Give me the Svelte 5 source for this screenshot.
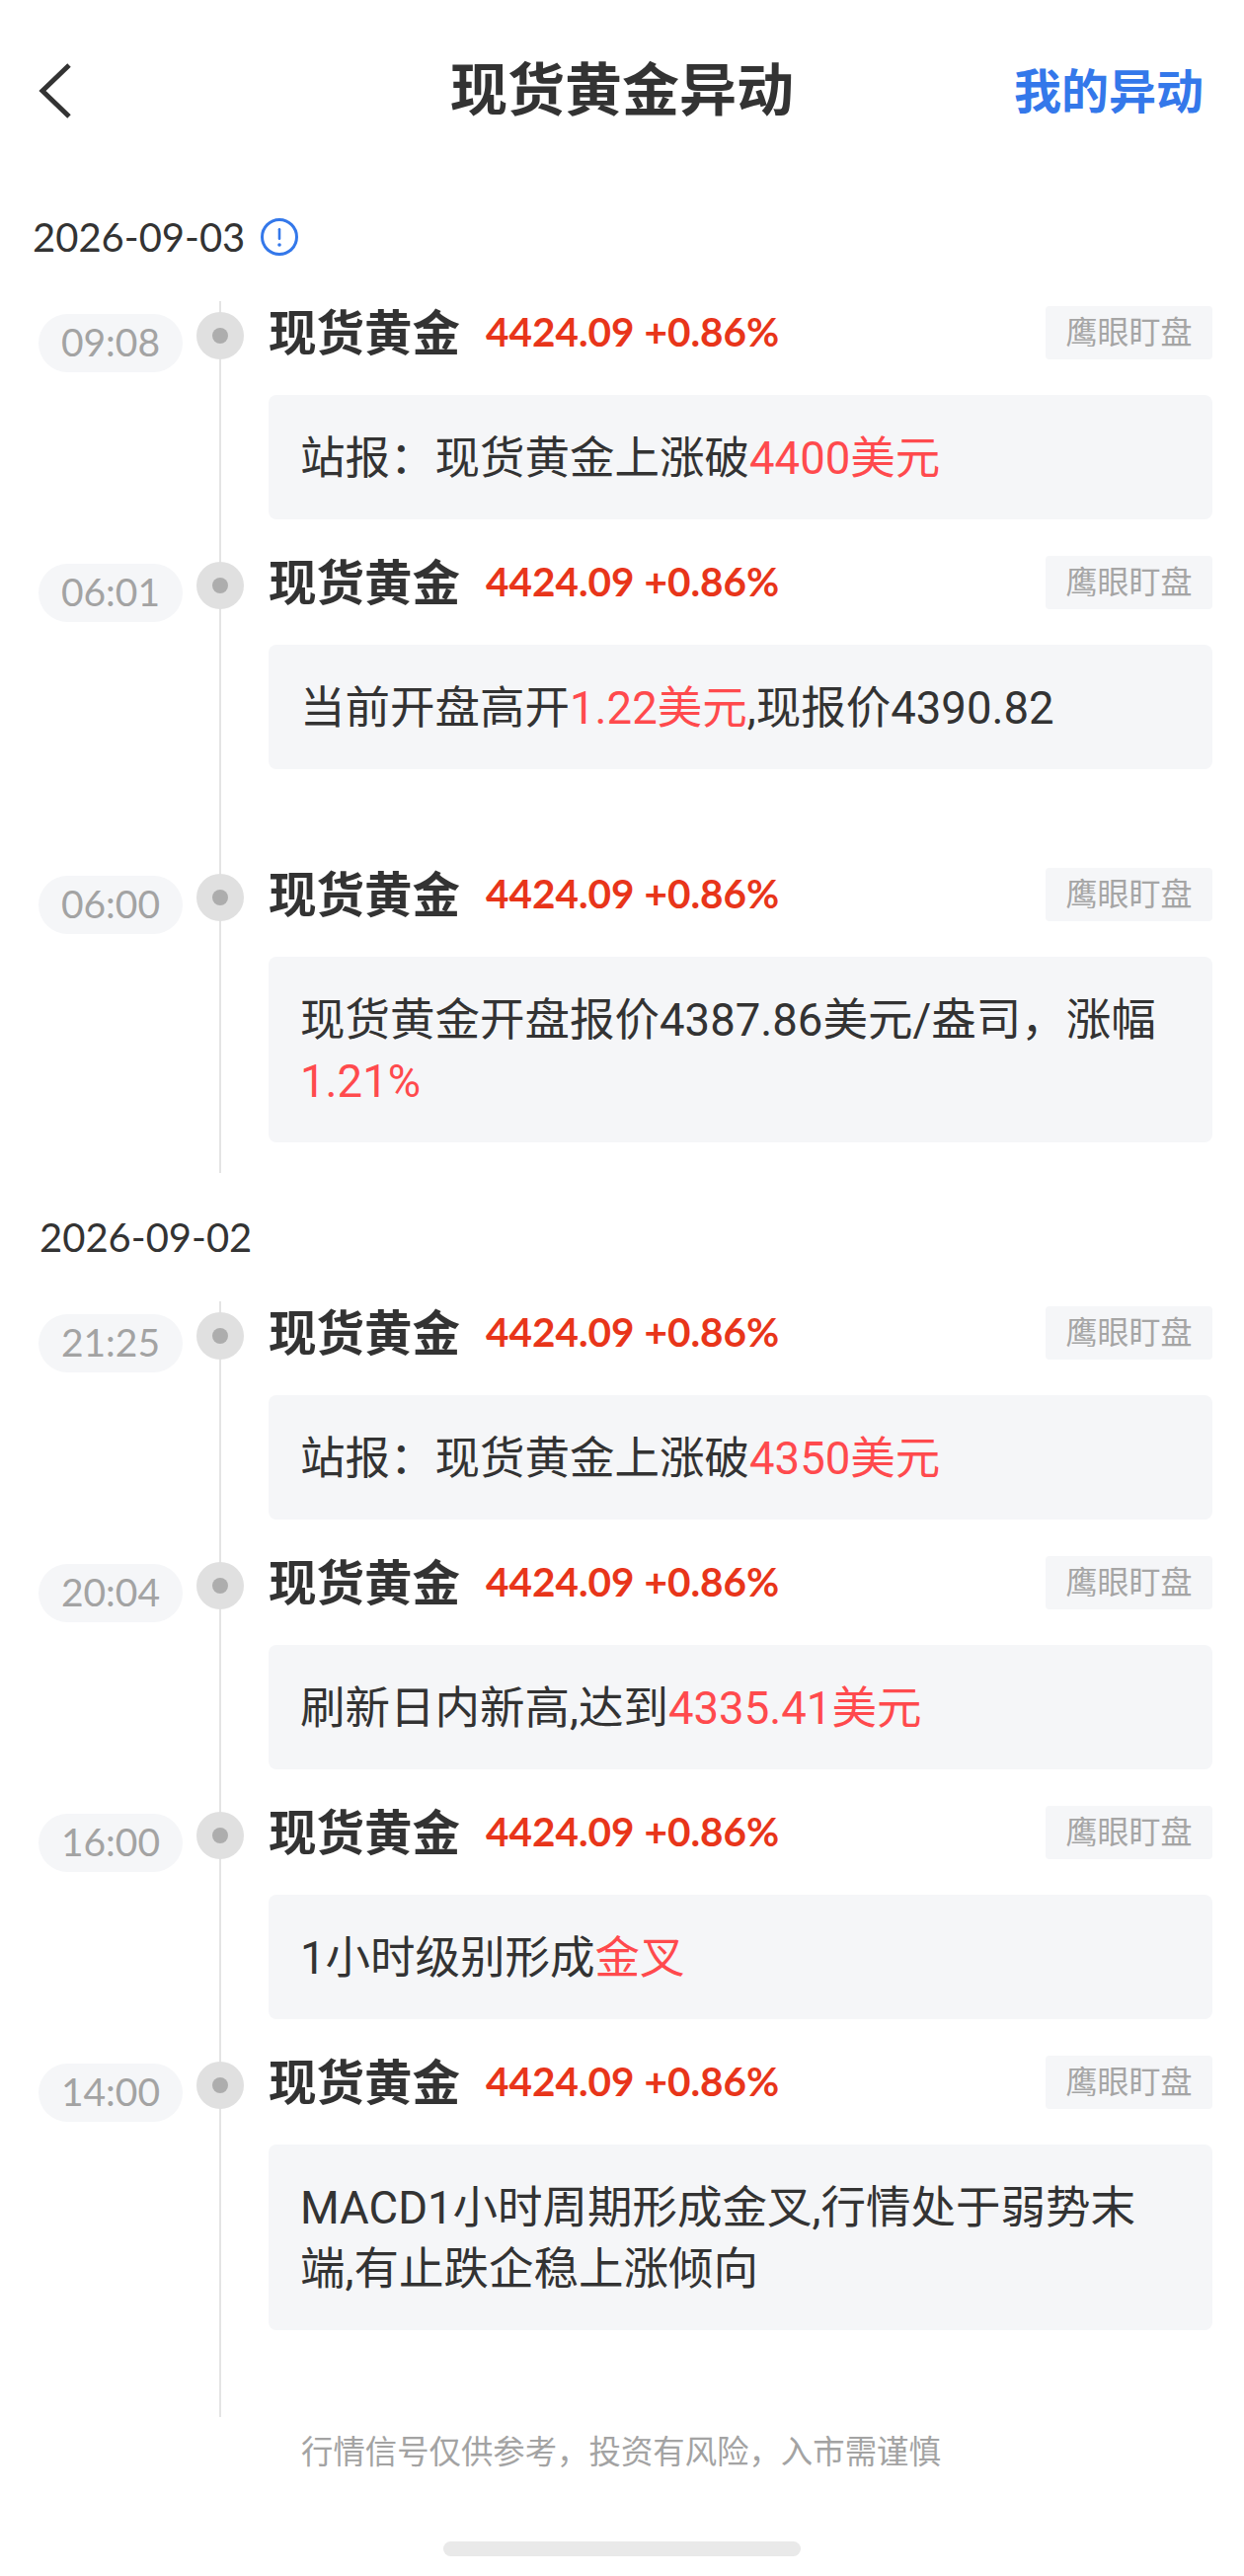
<script>
	const quote = "4424.09 +0.86%";
	const days = [
		{
			date: "2026-09-03",
			info: true,
			items: [
				{ time: "09:08", parts: [["站报：现货黄金上涨破"], ["4400美元", 1]] },
				{ time: "06:01", tall: true, parts: [["当前开盘高开"], ["1.22美元", 1], [",现报价4390.82"]] },
				{ time: "06:00", parts: [["现货黄金开盘报价4387.86美元/盎司，涨幅"], ["1.21%", 1]] }
			]
		},
		{
			date: "2026-09-02",
			items: [
				{ time: "21:25", parts: [["站报：现货黄金上涨破"], ["4350美元", 1]] },
				{ time: "20:04", parts: [["刷新日内新高,达到"], ["4335.41美元", 1]] },
				{ time: "16:00", parts: [["1小时级别形成"], ["金叉", 1]] },
				{ time: "14:00", parts: [["MACD1小时周期形成金叉,行情处于弱势末端,有止跌企稳上涨倾向"]] }
			]
		}
	];
</script>

<div class="page">
	<header class="nav">
		<svg class="back" width="34" height="56" viewBox="0 0 34 56">
			<path d="M31 2 L4 28 L31 54" fill="none" stroke="#333" stroke-width="5" />
		</svg>
		<h1>现货黄金异动</h1>
		<span class="mine">我的异动</span>
	</header>

	{#each days as day, d}
		<section class="day" class:first={d === 0}>
			<div class="date">
				<span>{day.date}</span>
				{#if day.info}
					<svg width="38" height="38" viewBox="0 0 38 38">
						<circle cx="19" cy="19" r="17.5" fill="none" stroke="#3478ea" stroke-width="3" />
						<rect x="17.7" y="10" width="2.6" height="12" rx="1.3" fill="#3478ea" />
						<circle cx="19" cy="27" r="1.8" fill="#3478ea" />
					</svg>
				{/if}
			</div>
			<div class="timeline">
				{#each day.items as item}
					<div class="row" class:tall={item.tall}>
						<div class="time">{item.time}</div>
						<div class="dot"><i></i></div>
						<div class="body">
							<div class="head">
								<b class="name">现货黄金</b>
								<b class="quote">{quote}</b>
								<span class="tag">鹰眼盯盘</span>
							</div>
							<p class="msg">
								{#each item.parts as part}
									{#if part[1]}<em>{part[0]}</em>{:else}{part[0]}{/if}
								{/each}
							</p>
						</div>
					</div>
				{/each}
			</div>
		</section>
	{/each}

	<p class="note">行情信号仅供参考，投资有风险，入市需谨慎</p>
	<div class="home"></div>
</div>

<style>
	:global(body) {
		margin: 0;
		background: #fff;
	}

	.page {
		width: 1260px;
		height: 2609px;
		overflow: hidden;
		font-family: Lato, "Noto Sans CJK SC", sans-serif;
		color: #333;
	}

	.nav {
		height: 184px;
		display: flex;
		align-items: center;
		justify-content: space-between;
		position: relative;
		padding: 0 41px 0 39px;
		box-sizing: border-box;
	}

	.nav h1 {
		position: absolute;
		left: 0;
		right: 0;
		top: 57px;
		margin: 0;
		line-height: 66px;
		text-align: center;
		font-size: 58px;
		font-weight: 700;
	}

	.mine {
		font-size: 48px;
		line-height: 56px;
		font-weight: 700;
		color: #3478ea;
	}

	.date {
		display: flex;
		align-items: center;
		gap: 16px;
		height: 50px;
		padding-left: 40px;
		font-size: 40px;
		margin-top: 40px;
	}

	.day.first .date {
		padding-left: 33px;
		margin-top: 31px;
	}

	.timeline {
		position: relative;
		margin-top: 40px;
		padding-top: 5px;
		padding-bottom: 31px;
	}

	.day:last-of-type .timeline {
		padding-bottom: 88px;
	}

	.timeline::before {
		content: "";
		position: absolute;
		left: 222px;
		top: 0;
		bottom: 0;
		width: 2px;
		background: #e4e4e4;
	}

	.row {
		display: flex;
		align-items: flex-start;
		padding: 0 32px 0 39px;
		margin-bottom: 37px;
		position: relative;
	}

	.row.tall {
		margin-bottom: 100px;
	}

	.row:last-child {
		margin-bottom: 0;
	}

	.time {
		width: 146px;
		height: 59px;
		margin-top: 8px;
		border-radius: 30px;
		background: #f5f6f8;
		color: #a3a3a3;
		font-size: 39px;
		line-height: 57px;
		text-align: center;
		flex: none;
	}

	.dot {
		width: 48px;
		height: 48px;
		margin: 6px 0 0 14px;
		border-radius: 50%;
		background: #e0e0e0;
		display: flex;
		align-items: center;
		justify-content: center;
		flex: none;
	}

	.dot i {
		width: 16px;
		height: 16px;
		border-radius: 50%;
		background: #adadad;
	}

	.body {
		flex: 1;
		margin-left: 25px;
		min-width: 0;
	}

	.head {
		display: flex;
		align-items: center;
		height: 54px;
	}

	.name {
		font-size: 48.5px;
		font-weight: 700;
		line-height: 50px;
		margin-top: -3px;
	}

	.quote {
		margin-left: 26px;
		font-size: 40.5px;
		font-weight: 700;
		color: #e8351a;
		line-height: 50px;
		margin-top: -3px;
	}

	.tag {
		margin-left: auto;
		width: 169px;
		height: 54px;
		line-height: 52px;
		text-align: center;
		font-size: 32px;
		color: #a5a5a5;
		background: #f5f6f8;
		border-radius: 4px;
	}

	.msg {
		margin: 36px 0 0;
		padding: 34px 32px 30px;
		background: #f5f6f8;
		border-radius: 8px;
		font-family: Roboto, "Noto Sans CJK SC", sans-serif;
		font-size: 45.5px;
		line-height: 62px;
		color: #333;
	}

	.msg em {
		font-style: normal;
		color: #ff4a4d;
	}

	.note {
		margin: 13px 0 0;
		padding-left: 305px;
		font-size: 32.4px;
		line-height: 44px;
		color: #a3a3a3;
	}

	.home {
		width: 362px;
		height: 15px;
		margin: 69px auto 0;
		border-radius: 8px;
		background: #e9e9e9;
	}
</style>
